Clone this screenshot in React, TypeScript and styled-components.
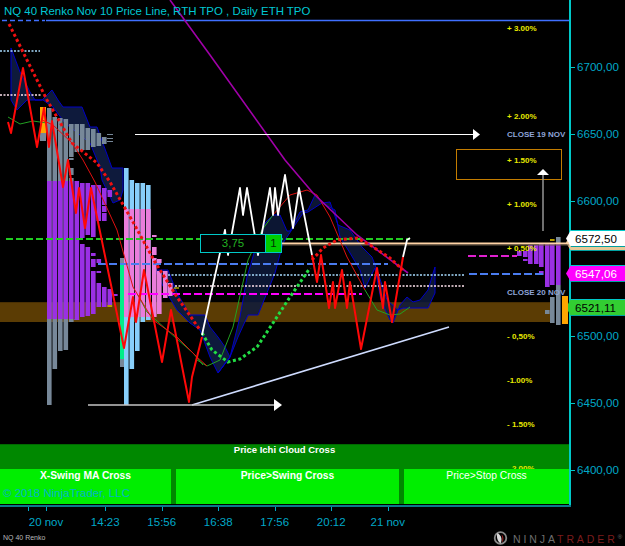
import React from 'react'
import styled, { createGlobalStyle } from 'styled-components'

const PURPLE = '#9a30e4'
const GRAY = '#778899'
const SKY = '#87cefa'
const PINK = '#ea7ddb'

type Bar = [number, number, number, string, number?]

// x, top, bottom, colour, width
const leftBars: Bar[] = [
  [40, 107, 141, GRAY, 6],
  [40, 107, 133, '#ffa500', 6],
  [47, 108, 405, GRAY],
  [52.5, 117, 369, GRAY],
  [58, 118, 351, GRAY],
  [63.5, 119, 350, GRAY],
  [69, 124, 157, GRAY],
  [69, 158, 160, GRAY],
  [69, 168, 175, GRAY],
  [69, 178, 181, GRAY],
  [69, 319, 322, GRAY],
  [74.5, 124, 152, GRAY],
  [74.5, 319, 320, GRAY],
  [80, 124, 150, GRAY],
  [85.5, 128, 150, GRAY],
  [91, 129, 147, GRAY],
  [96.5, 133, 146, GRAY],
  [102, 137, 144, GRAY],
  [107, 134, 135, GRAY, 6],
  [107, 138, 139, GRAY, 6],
  [107, 141, 142, GRAY, 6],
  [47, 181, 319, PURPLE],
  [52.5, 181, 319, PURPLE],
  [58, 181, 319, PURPLE],
  [63.5, 181, 319, PURPLE],
  [69, 181, 319, PURPLE],
  [74.5, 181, 320, PURPLE],
  [80, 183, 238, PURPLE],
  [80, 244, 317, PURPLE],
  [85.5, 183, 235, PURPLE],
  [85.5, 247, 316, PURPLE],
  [91, 185, 237, PURPLE],
  [91, 253, 256, PURPLE],
  [91, 259, 267, PURPLE],
  [91, 271, 314, PURPLE],
  [96.5, 185, 221, PURPLE],
  [96.5, 259, 263, PURPLE],
  [96.5, 271, 273, PURPLE],
  [96.5, 283, 307, PURPLE],
  [102, 188, 205, PURPLE],
  [102, 206, 212, PURPLE],
  [102, 213, 221, PURPLE],
  [102, 287, 307, PURPLE],
  [107.5, 190, 197, PURPLE],
  [107.5, 289, 307, PURPLE],
  [113, 294, 296, PURPLE],
  [107.5, 305, 307, '#b8a000'],
  [120, 258, 367, GRAY, 4],
  [120, 263, 359, '#00ee88', 4],
  [124, 168, 405, SKY],
  [129.5, 180, 369, SKY],
  [135, 183, 351, SKY],
  [140.5, 183, 322, SKY],
  [146, 185, 320, SKY],
  [124, 209, 317, PINK],
  [129.5, 209, 317, PINK],
  [135, 209, 317, PINK],
  [140.5, 209, 317, PINK],
  [146, 209, 317, PINK],
  [152, 235, 237, PINK],
  [152, 247, 255, PINK],
  [152, 258, 317, PINK],
  [157, 259, 263, PINK],
  [157, 271, 314, PINK],
  [163, 271, 298, PINK],
  [168, 283, 296, PINK],
  [173, 293, 295, PINK],
]

const rightBars: Bar[] = [
  [517, 251, 256, PURPLE],
  [523, 251, 257, PURPLE],
  [523, 259, 261, PURPLE],
  [528, 245, 264, PURPLE],
  [534, 245, 264, PURPLE],
  [539, 244, 267, PURPLE],
  [539, 271, 275, PURPLE],
  [545, 244, 287, PURPLE],
  [550, 244, 285, PURPLE],
  [550, 297, 323, GRAY],
  [545, 310, 314, GRAY],
  [556, 237, 243, GRAY],
  [556, 243, 285, PURPLE],
  [556, 285, 325, GRAY],
  [550, 239, 241, '#b8a000'],
  [562, 296, 324, '#ffa500', 6],
]

const upperCloud = '11,48 20,72 30,92 35,100 42,100 52,90 58,100 63,107 82,107 90,127 97,127 112,168 123,168 123,190 120,200 113,203 102,180 100,167 90,143 65,123 53,107 43,100 27,100 17,110 11,100'
const midCloud = '155,270 168,270 177,293 190,315 205,315 210,327 218,337 225,347 230,357 218,373 210,357 200,330 190,323 177,310 165,290'
const mainCloud = '218,373 230,357 240,317 247,277 257,243 265,223 273,215 280,215 287,231 290,231 300,212 308,210 315,195 322,203 330,202 338,225 350,230 362,247 372,257 377,270 387,300 398,310 403,308 428,308 435,293 435,267 428,290 420,300 413,302 407,297 400,305 393,323 390,320 381,300 375,268 365,288 360,270 350,253 340,237 335,210 322,203 308,212 303,213 283,243 275,273 258,315 248,315 238,337 230,357'

const priceRed = '8,122 11,133 23,68 37,147 44,108 49,147 52,121 63,187 68,160 76,213 79,188 85,228 91,188 124,348 133,297 136,322 144,270 162,362 171,310 189,402 192,377 202,337'
const priceWhite = '202,335 225,230 228,255 240,188 243,215 247,188 258,255 270,188 273,215 275,188 278,215 285,175 293,228 299,188 312,255'
const priceRedRight = '312,255 317,282 321,255 329,308 333,282 335,308 342,270 347,308 350,282 361,349 377,268 383,308 385,282 392,322 403,257'
const thinRed = '42,120 53,125 72,143 83,160 95,182 117,230 133,287 153,320 177,337 197,357 207,366'
const thinRedHigh = '273,215 290,195 307,190 317,195 330,217 347,257 365,290'
const thinGreen = '197,360 207,366 220,360 233,327 248,260 262,230 273,215'
const thinGreenLow = '365,290 377,310 390,315 400,314 410,307'
const thinGreenTop = '8,117 20,124 33,121 47,123'
const thinGreenMid = '138,295 147,312 167,330 193,353 203,365'

const percents: [string, number][] = [
  ['+ 3.00%', 31],
  ['+ 2.00%', 119],
  ['+ 1.50%', 163],
  ['+ 1.00%', 207],
  ['+ 0,50%', 251],
  ['- 0,50%', 339],
  ['-1.00%', 383],
  ['- 1.50%', 427],
  ['- 2.00%', 471],
]

// 6550 sits under the magenta price tag in the chart, so it has no text here
const axisPrices = ['6700,00', '6650,00', '6600,00', '', '6500,00', '6450,00', '6400,00']
const timeLabels = ['20 nov', '14:23', '15:56', '16:38', '17:56', '20:12', '21 nov']

const Bars = ({ data }: { data: Bar[] }) => (
  <>
    {data.map(([x, top, bottom, fill, w], i) => (
      <rect key={i} x={x} y={top} width={w || 4.6} height={bottom - top} fill={fill} />
    ))}
  </>
)

const ChartDrawing = () => (
  <Canvas viewBox="0 0 570 469">
    <rect x="0" y="302" width="551" height="20" fill="#5b3c04" />
    <rect x="0" y="302" width="551" height="1" fill="#4a3003" />

    <polygon points={upperCloud} fill="#0e1a3c" stroke="#0000c8" strokeWidth="1" />
    <polygon points={midCloud} fill="#0e1a3c" stroke="#0000c8" strokeWidth="1" />
    <polygon points={mainCloud} fill="#0e1a3c" fillOpacity="0.85" stroke="#0000c8" strokeWidth="1" />

    <Bars data={leftBars} />
    <Bars data={rightBars} />

    <line x1="2" y1="20.5" x2="45" y2="20.5" stroke="#3f6fff" strokeWidth="1.5" strokeDasharray="5 3" />
    <line x1="46" y1="20.5" x2="570" y2="20.5" stroke="#3f6fff" strokeWidth="1.5" />
    <line x1="0" y1="51" x2="40" y2="51" stroke="#a8dcff" strokeWidth="1.6" strokeDasharray="2 1.5" />
    <line x1="0" y1="95" x2="42" y2="95" stroke="#ffe4ee" strokeWidth="1.6" strokeDasharray="2 1.5" />

    <line x1="6" y1="239" x2="410" y2="239" stroke="#22cc22" strokeWidth="2" strokeDasharray="7 3" />
    <line x1="98" y1="264" x2="388" y2="264" stroke="#4a7cf0" strokeWidth="2" strokeDasharray="8 3" />
    <line x1="469" y1="274" x2="544" y2="274" stroke="#4a7cf0" strokeWidth="2" strokeDasharray="8 3" />
    <line x1="168" y1="275" x2="465" y2="275" stroke="#a8dcff" strokeWidth="1.6" strokeDasharray="2 1.5" />
    <line x1="175" y1="286" x2="465" y2="286" stroke="#ffe4ee" strokeWidth="1.6" strokeDasharray="2 1.5" />
    <line x1="128" y1="294" x2="362" y2="294" stroke="#ff00ff" strokeWidth="2" strokeDasharray="8 3" />
    <line x1="468" y1="256" x2="517" y2="256" stroke="#e020d0" strokeWidth="2" strokeDasharray="8 3" />
    <line x1="174" y1="288" x2="179" y2="288" stroke="#ffff00" strokeWidth="1" />

    <line x1="282" y1="243.5" x2="570" y2="243.5" stroke="#ffd3a6" strokeWidth="2" />
    <line x1="282" y1="245" x2="570" y2="245" stroke="#6b5a48" strokeWidth="1" />

    <rect x="456.5" y="149.5" width="105" height="30" fill="none" stroke="#c47c00" strokeWidth="1" />

    <polyline points={thinGreenTop} fill="none" stroke="#22a022" strokeWidth="1" />
    <polyline points={thinGreenMid} fill="none" stroke="#22a022" strokeWidth="1" />
    <polyline points={thinGreen} fill="none" stroke="#22a022" strokeWidth="1" />
    <polyline points={thinGreenLow} fill="none" stroke="#22a022" strokeWidth="1" />
    <polyline points={thinRed} fill="none" stroke="#e01010" strokeWidth="1" />
    <polyline points={thinRedHigh} fill="none" stroke="#e01010" strokeWidth="1" />

    <polyline points="170,0 210,55 285,160 313,193 357,235 408,273" fill="none" stroke="#a000a8" strokeWidth="1.6" />

    <polyline
      points="9,24 47,100 72,143 97,163 110,182 133,222 155,262 177,297 200,330"
      fill="none" stroke="#f01010" strokeWidth="3" strokeDasharray="3 2.6"
    />
    <polyline
      points="202,333 212,350 228,362 240,359 257,347 273,323 290,297 310,268"
      fill="none" stroke="#22dd44" strokeWidth="3" strokeDasharray="3 2.6"
    />
    <polyline
      points="312,260 323,248 337,240 357,238 370,245 390,258 403,270"
      fill="none" stroke="#f01010" strokeWidth="3" strokeDasharray="3 2.6"
    />

    <polyline points={priceRed} fill="none" stroke="#ff0808" strokeWidth="2" strokeLinejoin="round" />
    <polyline points={priceRedRight} fill="none" stroke="#ff0808" strokeWidth="2" strokeLinejoin="round" />
    <polyline points={priceWhite} fill="none" stroke="#ffffff" strokeWidth="1.8" strokeLinejoin="round" />
    <polyline points="403,257 407,240 410,238" fill="none" stroke="#ffffff" strokeWidth="1.8" />

    <line x1="192" y1="405" x2="449" y2="327" stroke="#cfdcff" strokeWidth="1.6" />

    <line x1="135" y1="134.5" x2="474" y2="134.5" stroke="#ffffff" strokeWidth="1" />
    <polygon points="473,129 480,134.5 473,140" fill="#ffffff" />
    <line x1="88" y1="405" x2="274" y2="405" stroke="#c4c4c4" strokeWidth="1.4" />
    <polygon points="274,399 282,405 274,411" fill="#ffffff" />
    <line x1="543" y1="231" x2="543" y2="174" stroke="#a0a0a0" strokeWidth="1.4" />
    <polygon points="537,175 543,169 549,175" fill="#ffffff" />

    {percents.map(([text, y]) => (
      <Percent key={text} x="507" y={y}>{text}</Percent>
    ))}
    <CloseLabel x="507" y="137">CLOSE 19 NOV</CloseLabel>
    <CloseLabel x="507" y="295">CLOSE 20 NOV</CloseLabel>
  </Canvas>
)

const NinjaMark = () => (
  <MarkIcon viewBox="0 0 15 14">
    <circle cx="7.5" cy="7" r="5.8" fill="none" stroke="#8a8a8a" strokeWidth="1.8" />
    <path d="M4.5 2 C8.5 4.5 9.5 8.5 7.5 12.5 C4.5 10.5 3 5.5 4.5 2Z" fill="#d8d8d8" />
    <path d="M8.5 3.5 C11 5.5 11 9.5 9 11.5 C9.5 8.5 9.5 6.5 8.5 3.5Z" fill="#a02020" />
  </MarkIcon>
)

const App = () => (
  <Page>
    <GlobalStyle />
    <ChartRow>
      <PlotColumn>
        <ChartPane>
          <ChartDrawing />
          <Title>NQ 40 Renko Nov 10 Price Line, RTH TPO , Daily ETH TPO</Title>
          <CloudBand>Price Ichi Cloud Cross</CloudBand>
          <RangeBox>
            <RangeValue>3,75</RangeValue>
            <RangeCount>1</RangeCount>
          </RangeBox>
        </ChartPane>
        <SignalRow>
          <Signal $width={171}>
            X-Swing MA Cross
            <Copyright>© 2018 NinjaTrader, LLC</Copyright>
          </Signal>
          <Signal $width={223}>Price&gt;Swing Cross</Signal>
          <Signal $width={165} $light>Price&gt;Stop Cross</Signal>
        </SignalRow>
      </PlotColumn>
      <PriceAxis>
        {axisPrices.map((p, i) => (
          <AxisRow key={i}>{p}</AxisRow>
        ))}
        <PriceTag $top={234} $bg="#e8c898" $color="#000000" />
        <PriceTag $top={230} $bg="#ffffff" $color="#000000">6572,50</PriceTag>
        <PriceTag $top={265} $bg="#ff00ff" $color="#ffffff">6547,06</PriceTag>
        <PriceTag $top={299} $bg="#32cd32" $color="#000000">6521,11</PriceTag>
      </PriceAxis>
    </ChartRow>
    <TimeAxis>
      <ExtraTick />
      {timeLabels.map((t, i) => (
        <TimeSlot key={t} $first={i === 0}>{t}</TimeSlot>
      ))}
    </TimeAxis>
    <Footer>
      <InstrumentName>NQ 40 Renko</InstrumentName>
      <Brand>
        <NinjaMark />
        <BrandName>
          NINJA<BrandAccent>TRADER</BrandAccent><BrandMark>®</BrandMark>
        </BrandName>
      </Brand>
    </Footer>
  </Page>
)

const GlobalStyle = createGlobalStyle`
  html, body {
    margin: 0;
    padding: 0;
    background: #000;
  }
`

const Page = styled.div`
  width: 625px;
  height: 546px;
  background: #000;
  font-family: 'Liberation Sans', Arial, sans-serif;
  overflow: hidden;
  display: flex;
  flex-direction: column;
`

const ChartRow = styled.div`
  display: flex;
  height: 505px;
`

const PlotColumn = styled.div`
  width: 569px;
  display: flex;
  flex-direction: column;
`

const ChartPane = styled.div`
  position: relative;
  height: 469px;
  display: flex;
  flex-direction: column;
  justify-content: space-between;
  overflow: hidden;
`

const Canvas = styled.svg`
  position: absolute;
  top: 0;
  left: 0;
  width: 570px;
  height: 469px;
  z-index: 1;
`

const Percent = styled.text`
  font-size: 8px;
  font-weight: bold;
  fill: #e8e800;
`

const CloseLabel = styled.text`
  font-size: 8px;
  font-weight: bold;
  fill: #8ea4d8;
`

const Title = styled.div`
  position: relative;
  z-index: 2;
  padding: 4px 0 0 4px;
  font-size: 11.45px;
  line-height: 15px;
  color: #00c8d4;
  white-space: nowrap;
`

const CloudBand = styled.div`
  height: 25px;
  box-sizing: border-box;
  background: #008800;
  border-top: 1px solid #006a00;
  color: #fff;
  font-size: 9.5px;
  font-weight: bold;
  line-height: 10px;
  text-align: center;
`

const RangeBox = styled.div`
  position: absolute;
  left: 200px;
  top: 234px;
  width: 82px;
  height: 19px;
  box-sizing: border-box;
  display: flex;
  border: 1px solid #00c8c8;
  background: #000;
  z-index: 3;
`

const RangeValue = styled.div`
  flex: 1;
  text-align: center;
  color: #22b022;
  font-size: 11.5px;
  line-height: 17px;
`

const RangeCount = styled.div`
  width: 15px;
  text-align: center;
  background: #00cc00;
  border-left: 1px solid #00c8c8;
  color: #003300;
  font-size: 11.5px;
  line-height: 17px;
`

const SignalRow = styled.div`
  height: 35px;
  display: flex;
  gap: 5px;
  background: #008800;
`

const Signal = styled.div<{ $width: number; $light?: boolean }>`
  width: ${(p) => p.$width}px;
  background: #00ee00;
  color: #fff;
  font-size: 10.3px;
  font-weight: ${(p) => (p.$light ? 'normal' : 'bold')};
  line-height: 13px;
  text-align: center;
  display: flex;
  flex-direction: column;
  gap: 5px;
`

const Copyright = styled.span`
  padding-left: 3px;
  font-size: 11.5px;
  font-weight: normal;
  color: #00b4c8;
  text-align: left;
`

const PriceAxis = styled.div`
  position: relative;
  flex: 1;
  box-sizing: border-box;
  border-left: 2px solid #00c8c8;
  padding-top: 60px;
  display: flex;
  flex-direction: column;
`

const AxisRow = styled.div`
  height: 67.2px;
  flex: none;
  display: flex;
  align-items: flex-start;
  gap: 2px;
  font-size: 11.6px;
  line-height: 14px;
  color: #00a8c8;

  &::before {
    content: '';
    width: 4px;
    height: 1px;
    margin: 7px 0 0 0;
    background: #00c8c8;
  }
`

const PriceTag = styled.div<{ $top: number; $bg: string; $color: string }>`
  position: absolute;
  top: ${(p) => p.$top}px;
  left: -5px;
  width: 60px;
  height: 17px;
  box-sizing: border-box;
  padding-left: 9px;
  background: ${(p) => p.$bg};
  color: ${(p) => p.$color};
  border-top: 1px solid #00c8c8;
  border-bottom: 1px solid #00a0a0;
  font-size: 11.6px;
  line-height: 15px;
  clip-path: polygon(0 50%, 5px 0, 100% 0, 100% 100%, 5px 100%);
`

const TimeAxis = styled.div`
  position: relative;
  width: 571px;
  height: 25px;
  box-sizing: border-box;
  border-top: 2px solid #0a7a8a;
  padding-left: 17px;
  display: flex;
`

const ExtraTick = styled.span`
  position: absolute;
  top: 0;
  left: 28px;
  width: 1px;
  height: 4px;
  background: #00a8c8;
`

const TimeSlot = styled.div<{ $first?: boolean }>`
  position: relative;
  width: ${(p) => (p.$first ? '58px' : '56.5px')};
  flex: none;
  padding-top: 8px;
  text-align: center;
  font-size: 11.5px;
  line-height: 14px;
  color: #00a8c8;

  &::before {
    content: '';
    position: absolute;
    top: 0;
    left: 50%;
    width: 1px;
    height: 4px;
    background: #00a8c8;
  }

  ${(p) => !p.$first && 'left: 2px;'}
`

const Footer = styled.div`
  flex: 1;
  display: flex;
  align-items: flex-start;
  justify-content: space-between;
  padding-left: 3px;
`

const InstrumentName = styled.span`
  font-size: 7px;
  line-height: 14px;
  padding-top: 1px;
  color: #b8b8b8;
`

const Brand = styled.div`
  display: flex;
  align-items: center;
  gap: 5px;
  width: 132px;
  flex: none;
  margin-top: 1px;
`

const MarkIcon = styled.svg`
  width: 15px;
  height: 14px;
  flex: none;
`

const BrandName = styled.span`
  padding-top: 1px;
  font-size: 10.5px;
  letter-spacing: 2.9px;
  color: #6e6e6e;
  white-space: nowrap;
`

const BrandAccent = styled.span`
  color: #7c1c1c;
`

const BrandMark = styled.span`
  font-size: 6px;
  letter-spacing: 0;
  vertical-align: super;
`

export default App
